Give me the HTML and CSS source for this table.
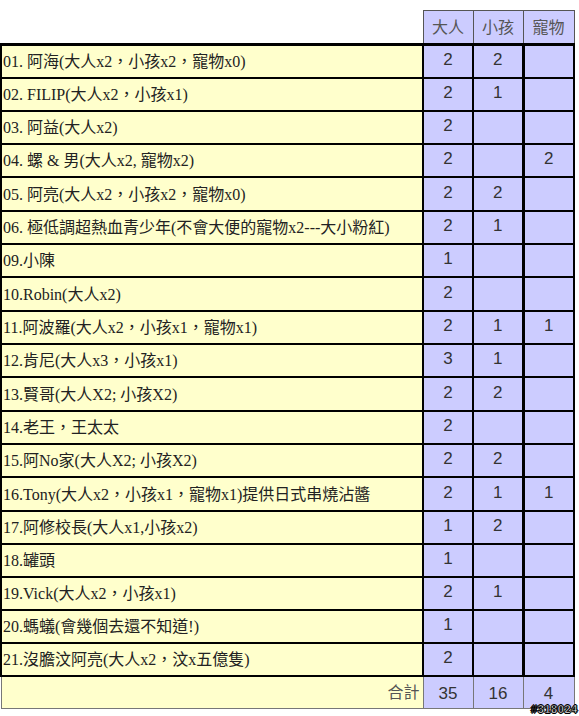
FILE: index.html
```html
<!DOCTYPE html>
<html lang="zh-Hant">
<head>
<meta charset="utf-8">
<title>報名表</title>
<link rel="stylesheet" href="styles.css">
</head>
<body>
<div class="sheet">
<table class="roster">
  <colgroup>
    <col class="c-name"><col class="c-num"><col class="c-num"><col class="c-num3">
  </colgroup>
  <thead>
    <tr class="head">
      <th class="blank"></th><th>大人</th><th>小孩</th><th>寵物</th>
    </tr>
  </thead>
  <tbody>
    <tr class="first"><td class="name">01. 阿海(大人x2，小孩x2，寵物x0)</td><td>2</td><td>2</td><td class="pet"></td></tr>
    <tr><td class="name">02. FILIP(大人x2，小孩x1)</td><td>2</td><td>1</td><td class="pet"></td></tr>
    <tr><td class="name">03. 阿益(大人x2)</td><td>2</td><td></td><td class="pet"></td></tr>
    <tr><td class="name">04. 螺 &amp; 男(大人x2, 寵物x2)</td><td>2</td><td></td><td class="pet">2</td></tr>
    <tr class="tall"><td class="name">05. 阿亮(大人x2，小孩x2，寵物x0)</td><td>2</td><td>2</td><td class="pet"></td></tr>
    <tr><td class="name">06. 極低調超熱血青少年(不會大便的寵物x2---大小粉紅)</td><td>2</td><td>1</td><td class="pet"></td></tr>
    <tr><td class="name">09.小陳</td><td>1</td><td></td><td class="pet"></td></tr>
    <tr class="tall"><td class="name">10.Robin(大人x2)</td><td>2</td><td></td><td class="pet"></td></tr>
    <tr><td class="name">11.阿波羅(大人x2，小孩x1，寵物x1)</td><td>2</td><td>1</td><td class="pet">1</td></tr>
    <tr><td class="name">12.肯尼(大人x3，小孩x1)</td><td>3</td><td>1</td><td class="pet"></td></tr>
    <tr class="tall"><td class="name">13.賢哥(大人X2; 小孩X2)</td><td>2</td><td>2</td><td class="pet"></td></tr>
    <tr><td class="name">14.老王，王太太</td><td>2</td><td></td><td class="pet"></td></tr>
    <tr><td class="name">15.阿No家(大人X2; 小孩X2)</td><td>2</td><td>2</td><td class="pet"></td></tr>
    <tr class="tall"><td class="name">16.Tony(大人x2，小孩x1，寵物x1)提供日式串燒沾醬</td><td>2</td><td>1</td><td class="pet">1</td></tr>
    <tr><td class="name">17.阿修校長(大人x1,小孩x2)</td><td>1</td><td>2</td><td class="pet"></td></tr>
    <tr><td class="name">18.罐頭</td><td>1</td><td></td><td class="pet"></td></tr>
    <tr><td class="name">19.Vick(大人x2，小孩x1)</td><td>2</td><td>1</td><td class="pet"></td></tr>
    <tr><td class="name">20.螞蟻(會幾個去還不知道!)</td><td>1</td><td></td><td class="pet"></td></tr>
    <tr><td class="name">21.沒膽汶阿亮(大人x2，汶x五億隻)</td><td>2</td><td></td><td class="pet"></td></tr>
  </tbody>
  <tfoot>
    <tr class="total">
      <td class="name sum-label">合計</td><td class="sum">35</td><td class="sum">16</td><td class="pet sum">4</td>
    </tr>
  </tfoot>
</table>
<span class="stamp">#318024</span>
</div>
</body>
</html>
```

FILE: styles.css
```css
html, body {
  margin: 0;
  padding: 0;
  background: #ffffff;
}

.sheet {
  position: relative;
  width: 579px;
  height: 716px;
  padding-top: 10px;
  box-sizing: border-box;
}

.roster {
  border-collapse: collapse;
  table-layout: fixed;
  width: 574px;
}

.c-name { width: 422px; }
.c-num { width: 50px; }
.c-num3 { width: 51px; }

.roster th,
.roster td {
  padding: 0 0 2px 0;
  font-family: "Liberation Sans", "Noto Sans CJK TC", sans-serif;
  font-size: 17px;
  color: #333;
  text-align: center;
  background: #ccccff;
  border: 2px solid #000;
}

.head {
  height: 34px;
}

.head th {
  font-weight: normal;
  font-size: 16px;
  color: #555;
  border: 1px solid #555;
  border-bottom: 3px solid #000;
}

.head th.blank {
  background: #fff;
  border: none;
  border-bottom: 3px solid #000;
}

.roster tbody tr {
  height: 33px;
}

.roster tbody tr.tall {
  height: 34px;
}

.roster tr.first td {
  border-top: 3px solid #000;
}

.roster td.name {
  text-align: left;
  padding-left: 1px;
  background: #ffffcc;
  font-family: "Liberation Serif", "Noto Sans CJK TC", serif;
  font-size: 16px;
  color: #222;
  white-space: nowrap;
}

.roster td.pet {
  border-left: 3px solid #000;
}

.total {
  height: 33px;
}

.total td {
  border: 1px solid #777;
  border-top: 2px solid #000;
}

.total td.pet {
  border-left: 1px solid #777;
}

.roster td.sum-label {
  text-align: right;
  padding: 0 3px 2px 0;
  font-family: "Liberation Sans", "Noto Sans CJK TC", sans-serif;
  color: #555;
}

.roster td.sum {
  padding: 4px 0 0 0;
}

.stamp {
  position: absolute;
  right: 1px;
  bottom: 1px;
  font-family: "Liberation Sans", sans-serif;
  font-weight: bold;
  font-size: 11px;
  line-height: 12px;
  color: #fff;
  -webkit-text-stroke: 0.6px #000;
  text-shadow: 1px 0 0 #000, -1px 0 0 #000, 0 1px 0 #000, 0 -1px 0 #000;
  letter-spacing: 0.6px;
}
```
